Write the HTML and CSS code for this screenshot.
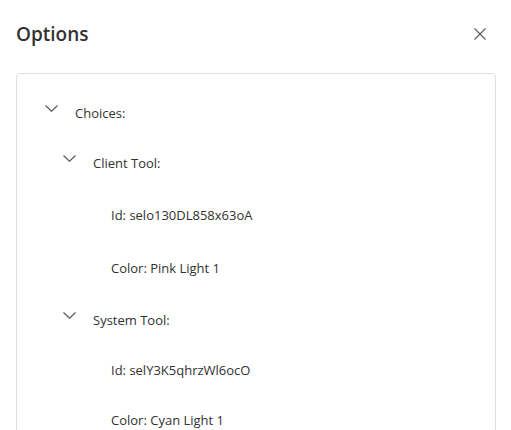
FILE: index.html
```html
<!DOCTYPE html>
<html>
<head>
<meta charset="utf-8">
<link rel="stylesheet" href="styles.css">
</head>
<body>
<div class="panel">
  <div class="header">
    <h1 class="title">Options</h1>
    <button class="close" aria-label="Close">
      <svg width="12" height="12" viewBox="0 0 12 12"><path d="M0.5 0.5 L11.5 11.5 M11.5 0.5 L0.5 11.5" stroke="#605e5c" stroke-width="1.2" fill="none"/></svg>
    </button>
  </div>
  <div class="box">
    <div class="row lvl0">
      <span class="chev"><svg width="13" height="7" viewBox="0 0 13 7"><path d="M0.5 0.5 L6.5 6.3 L12.5 0.5" stroke="#605e5c" stroke-width="1.2" fill="none"/></svg></span>
      <span class="label">Choices:</span>
    </div>
    <div class="row lvl1">
      <span class="chev"><svg width="13" height="7" viewBox="0 0 13 7"><path d="M0.5 0.5 L6.5 6.3 L12.5 0.5" stroke="#605e5c" stroke-width="1.2" fill="none"/></svg></span>
      <span class="label">Client Tool:</span>
    </div>
    <div class="row lvl2 tall">
      <span class="spacer"></span>
      <span class="label">Id: selo130DL858x63oA</span>
    </div>
    <div class="row lvl2 taller">
      <span class="spacer"></span>
      <span class="label">Color: Pink Light 1</span>
    </div>
    <div class="row lvl1">
      <span class="chev"><svg width="13" height="7" viewBox="0 0 13 7"><path d="M0.5 0.5 L6.5 6.3 L12.5 0.5" stroke="#605e5c" stroke-width="1.2" fill="none"/></svg></span>
      <span class="label">System Tool:</span>
    </div>
    <div class="row lvl2">
      <span class="spacer"></span>
      <span class="label">Id: selY3K5qhrzWl6ocO</span>
    </div>
    <div class="row lvl2">
      <span class="spacer"></span>
      <span class="label">Color: Cyan Light 1</span>
    </div>
  </div>
</div>
</body>
</html>
```

FILE: styles.css
```css
html, body {
  margin: 0;
  padding: 0;
  background: #ffffff;
}
body {
  font-family: "Open Sans", "Noto Sans", sans-serif;
  color: #323130;
}
.panel {
  padding: 0 15px 0 16px;
  height: 430px;
  overflow: hidden;
}
.header {
  display: flex;
  align-items: center;
  justify-content: space-between;
  height: 68px;
  margin-bottom: 5px;
}
.title {
  margin: 0;
  font-size: 19px;
  font-weight: 600;
  color: #323130;
  line-height: 26px;
}
.close {
  border: none;
  background: transparent;
  width: 32px;
  height: 32px;
  padding: 0;
  display: flex;
  align-items: center;
  justify-content: center;
}
.box {
  border: 1px solid #e1dfdd;
  border-radius: 4px;
  padding: 14px 0 40px 22px;
}
.row {
  display: flex;
  align-items: center;
  height: 50px;
  font-size: 13px;
}
.row.tall { height: 53px; }
.row.taller { height: 54px; }
.lvl1 { padding-left: 18px; }
.lvl2 { padding-left: 36px; }
.chev, .spacer {
  width: 24px;
  height: 24px;
  flex: none;
  display: flex;
  align-items: flex-start;
  justify-content: center;
  margin-right: 12px;
}
.chev svg {
  margin-top: 4px;
}
.label {
  white-space: nowrap;
}
```
